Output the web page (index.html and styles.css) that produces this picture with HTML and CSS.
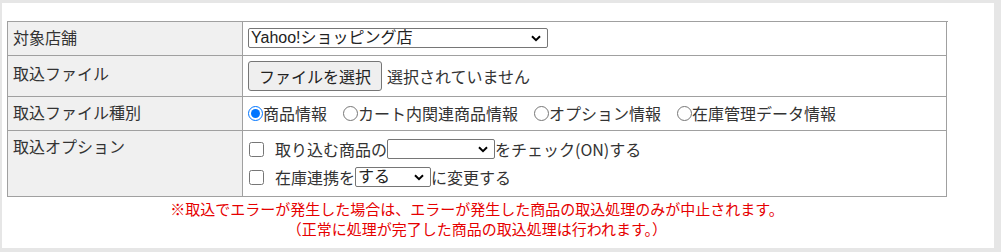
FILE: index.html
```html
<!DOCTYPE html>
<html lang="ja">
<head>
    <meta charset="UTF-8">
    <meta name="viewport" content="width=device-width, initial-scale=1.0">
    <title>商品データ取込</title>
    <link rel="stylesheet" href="styles.css">
</head>
<body>
    <div class="panel">
        <div class="form-grid">
            <div class="label">対象店舗</div>
            <div class="value">
                <select class="shop-select">
                    <option>Yahoo!ショッピング店</option>
                </select>
            </div>

            <div class="label label-file">取込ファイル</div>
            <div class="value value-file">
                <button type="button" class="file-button">ファイルを選択</button><span class="file-name">選択されていません</span>
            </div>

            <div class="label">取込ファイル種別</div>
            <div class="value radio-list">
                <label class="radio"><input type="radio" name="kind" checked>商品情報</label>
                <label class="radio"><input type="radio" name="kind">カート内関連商品情報</label>
                <label class="radio"><input type="radio" name="kind">オプション情報</label>
                <label class="radio"><input type="radio" name="kind">在庫管理データ情報</label>
            </div>

            <div class="label">取込オプション</div>
            <div class="value option-list">
                <div class="option-row">
                    <input type="checkbox"><span>取り込む商品の</span><select class="check-select"><option></option></select><span>をチェック(ON)する</span>
                </div>
                <div class="option-row">
                    <input type="checkbox"><span>在庫連携を</span><select class="stock-select"><option>する</option></select><span>に変更する</span>
                </div>
            </div>
        </div>

        <p class="note">
            ※取込でエラーが発生した場合は、エラーが発生した商品の取込処理のみが中止されます。<br>
            （正常に処理が完了した商品の取込処理は行われます。）
        </p>
    </div>
</body>
</html>
```

FILE: styles.css
```css
body {
    margin: 0;
    background-color: #e6e6e6;
    font-family: "Noto Sans CJK JP", "Noto Sans", sans-serif;
    font-size: 16px;
    color: #333;
}

.panel {
    margin: 3px 7px 0 2px;
    height: 245px;
    box-sizing: border-box;
    padding: 18px 0 0 5px;
    background-color: #fff;
}

.form-grid {
    display: grid;
    grid-template-columns: 235px 704px;
    grid-template-rows: 34px 41px 34px 66px;
    width: 940px;
    border-top: 1px solid #a0a0a0;
    border-left: 1px solid #a0a0a0;
}

.label,
.value {
    box-sizing: border-box;
    border-right: 1px solid #a0a0a0;
    border-bottom: 1px solid #a0a0a0;
    line-height: 20px;
}

.label {
    background-color: #f0f0f0;
    padding: 5px 0 0 5px;
}

.label-file {
    padding-top: 7px;
}

.value {
    padding: 6px 0 0 5px;
}

.value-file {
    padding-top: 5px;
    display: flex;
    align-items: flex-start;
}

.file-name {
    line-height: 30px;
}

select {
    appearance: none;
    font-family: "Liberation Sans", "Noto Sans CJK JP", sans-serif;
    font-size: 16px;
    line-height: 18px;
    color: #222;
    height: 20px;
    margin: 0;
    padding: 0 20px 0 2px;
    border: 1px solid #767676;
    border-radius: 2px;
    background: #fff url("data:image/svg+xml,%3Csvg xmlns='http://www.w3.org/2000/svg' viewBox='0 0 10 7'%3E%3Cpath d='M1 1.2 5 5.2 9 1.2' fill='none' stroke='%23000' stroke-width='2'/%3E%3C/svg%3E") no-repeat right 6px center / 10px 7px;
    box-sizing: border-box;
}

.shop-select {
    width: 300px;
    display: block;
}

.file-button {
    font-family: inherit;
    font-size: 16px;
    color: #222;
    height: 30px;
    padding: 0 10px;
    margin: 0 5px 0 0;
    line-height: 20px;
    background-color: #efefef;
    border: 1px solid #767676;
    border-radius: 3px;
}

.radio-list {
    display: flex;
    align-items: flex-start;
}

.radio {
    display: inline-flex;
    align-items: center;
    height: 20px;
    margin-right: 16px;
}

.radio input {
    width: 15px;
    height: 15px;
    margin: 0;
}

.option-list {
    padding-top: 8px;
    display: flex;
    flex-direction: column;
    gap: 8px;
}

.option-row {
    display: flex;
    align-items: center;
    height: 20px;
}

.option-row input {
    width: 15px;
    height: 15px;
    margin: 0 11px 0 1px;
}

.check-select {
    width: 108px;
}

.stock-select {
    width: 76px;
}

.note {
    width: 940px;
    margin: 2px 0 0;
    text-align: center;
    font-size: 15px;
    line-height: 20px;
    color: #e60000;
}
```
